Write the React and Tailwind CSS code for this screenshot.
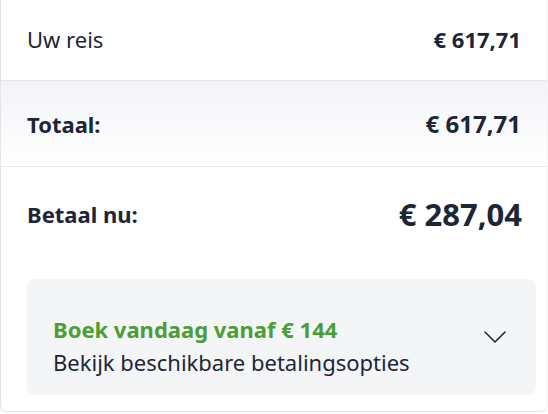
import React from 'react';

// Price summary card
const font = { fontFamily: '"Noto Sans", "Open Sans", sans-serif' };

function ChevronDown() {
    return (
        <svg width="22" height="12" viewBox="0 0 22 12" fill="none" className="shrink-0">
            <path d="M1 1l10 10L21 1" stroke="#1e2939" strokeWidth="1.6" strokeLinecap="round" strokeLinejoin="round" />
        </svg>
    );
}

export default function App() {
    return (
        <div className="w-[548px] h-[414px] bg-white overflow-hidden" style={font}>
            <div className="w-[548px] h-[412px] border-l border-b border-r border-r-[#f4f5f7] border-[#e3e5e8] rounded-b-[6px] text-[#1c2636] flex flex-col">

                {/* Uw reis */}
                <div className="h-[81px] shrink-0 flex items-center justify-between pl-[26px] pr-[26px] pb-[3px] border-b border-[#e6e8eb]">
                    <span className="text-[22px] leading-none">Uw reis</span>
                    <span className="text-[22px] font-bold leading-none">€ 617,71</span>
                </div>

                {/* Totaal */}
                <div className="h-[86px] shrink-0 flex items-center justify-between pl-[26px] pr-[26px] border-b border-[#e6e8eb] bg-gradient-to-b from-[#f3f4f7] to-white">
                    <span className="text-[22px] font-bold leading-none">Totaal:</span>
                    <span className="text-[24px] font-bold leading-none">€ 617,71</span>
                </div>

                {/* Betaal nu */}
                <div className="h-[94px] shrink-0 flex items-center justify-between pl-[26px] pr-[25px]">
                    <span className="text-[22px] font-bold leading-none">Betaal nu:</span>
                    <span className="text-[31px] font-bold leading-none">€ 287,04</span>
                </div>

                {/* Payment options */}
                <div className="mt-[18px] ml-[26px] mr-[11px] h-[116px] rounded-[8px] bg-[#f4f5f7] flex items-center justify-between pl-[26px] pr-[30px]">
                    <div className="flex flex-col pt-[18px]">
                        <span className="text-[22px] font-bold text-[#4b9e35] leading-[33px]">Boek vandaag vanaf € 144</span>
                        <span className="text-[22px] leading-[33px]">Bekijk beschikbare betalingsopties</span>
                    </div>
                    <ChevronDown />
                </div>

            </div>
        </div>
    );
}
